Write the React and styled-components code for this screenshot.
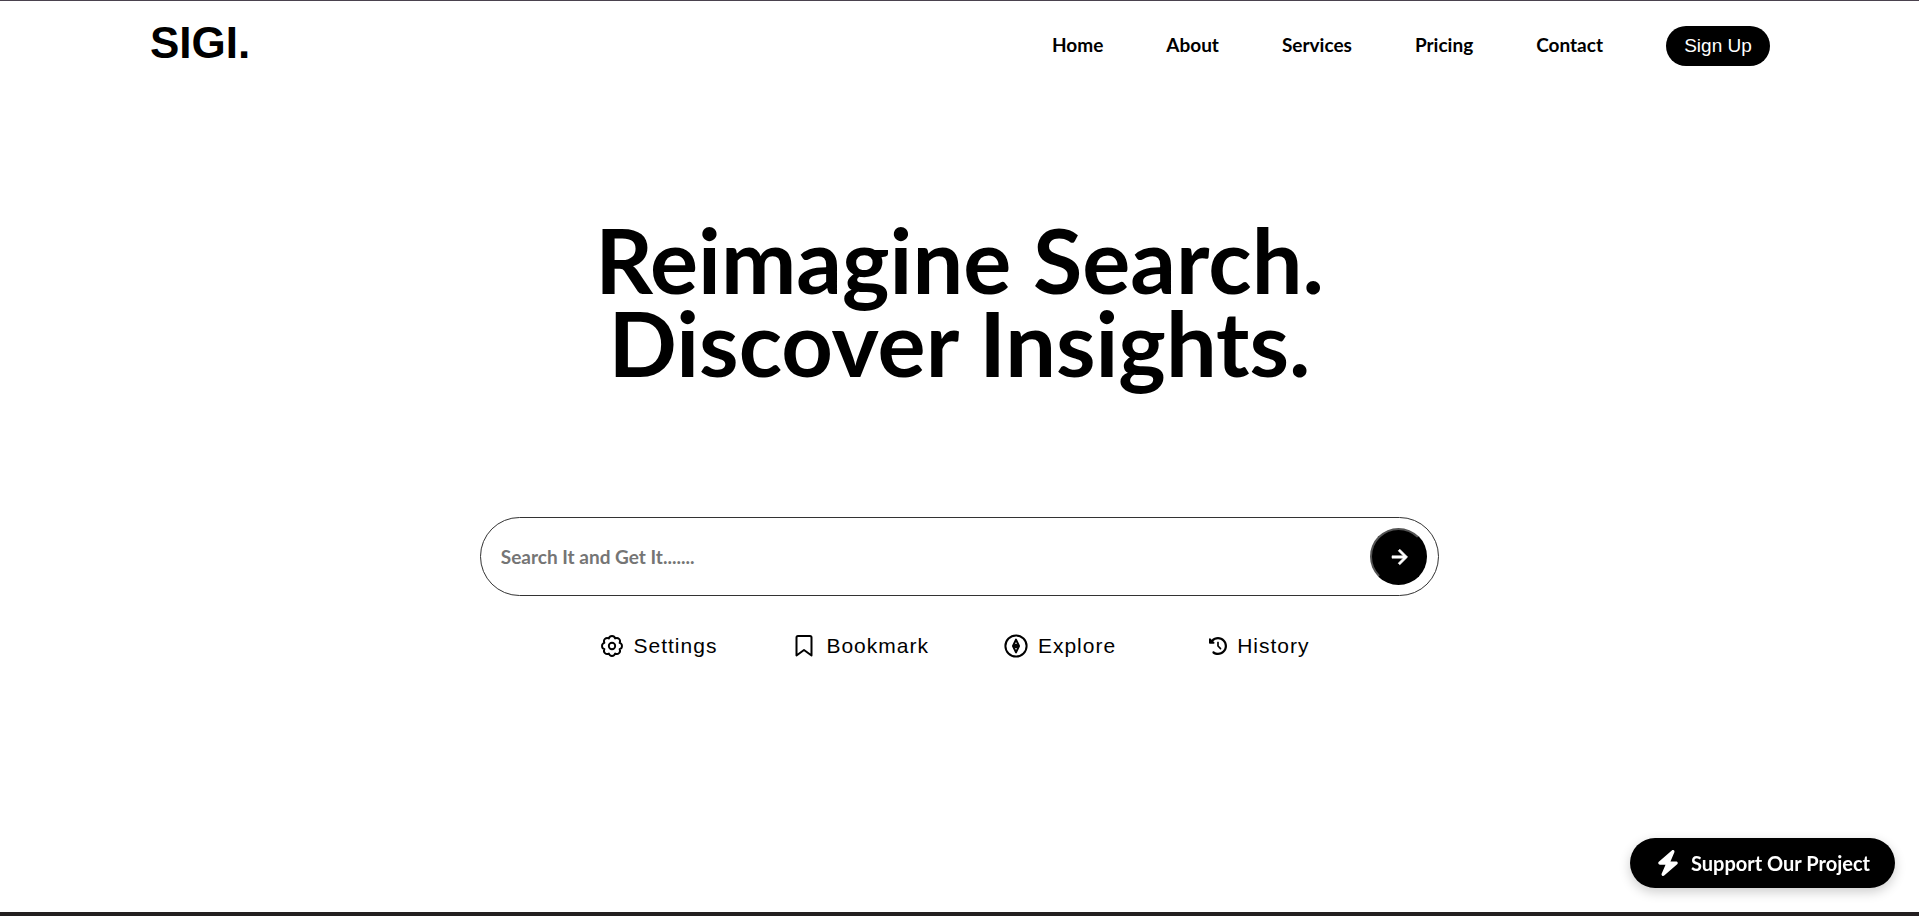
import React, { useState } from "react";
import styled, { createGlobalStyle } from "styled-components";
import { BiRightArrowAlt } from "react-icons/bi";
import { FaBolt, FaClockRotateLeft } from "react-icons/fa6";

const links = ["Home", "About", "Services", "Pricing", "Contact"];

const shortcuts = [
  { name: "Settings", icon: <SettingsIcon /> },
  { name: "Bookmark", icon: <BookmarkIcon /> },
  { name: "Explore", icon: <ExploreIcon /> },
  { name: "History", icon: <FaClockRotateLeft size={18} />, apart: true },
];

function SettingsIcon() {
  return (
    <svg width="24" height="24" viewBox="0 0 24 24" fill="none">
      <g stroke="currentColor" strokeWidth="1.9" strokeLinejoin="round">
        <path d="M8.86 4.42A3.25 3.25 0 0 1 15.14 4.42A3.25 3.25 0 0 1 19.58 8.86A3.25 3.25 0 0 1 19.58 15.14A3.25 3.25 0 0 1 15.14 19.58A3.25 3.25 0 0 1 8.86 19.58A3.25 3.25 0 0 1 4.42 15.14A3.25 3.25 0 0 1 4.42 8.86A3.25 3.25 0 0 1 8.86 4.42Z" />
        <circle cx="12" cy="12" r="3.2" />
      </g>
    </svg>
  );
}

function BookmarkIcon() {
  return (
    <svg width="24" height="24" viewBox="0 0 24 24" fill="none">
      <path
        d="M4.5 21.5V3.5Q4.5 2 6 2H18Q19.5 2 19.5 3.5V21.5L12 16Z"
        stroke="currentColor"
        strokeWidth="2"
        strokeLinejoin="round"
      />
    </svg>
  );
}

function ExploreIcon() {
  return (
    <svg width="24" height="24" viewBox="0 0 24 24" fill="none">
      <g stroke="currentColor" strokeWidth="2" strokeLinejoin="round">
        <circle cx="12" cy="12" r="10.6" />
        <path d="M12 5.6L15 12L12 18.4L9 12Z" />
        <circle cx="12" cy="12" r="1.2" />
      </g>
    </svg>
  );
}

export default function App() {
  const [query, queryChange] = useState("");

  return (
    <Page>
      <GlobalStyle />
      <Header>
        <Logo href="#">SIGI.</Logo>
        <Nav>
          {links.map((link) => {
            return (
              <NavLink key={link} href="#">
                {link}
              </NavLink>
            );
          })}
          <SignUp>Sign Up</SignUp>
        </Nav>
      </Header>
      <Hero>
        <Title>
          Reimagine Search.
          <br />
          Discover Insights.
        </Title>
        <SearchBar onSubmit={(ev) => ev.preventDefault()}>
          <SearchInput
            aria-label="Search"
            placeholder="Search It and Get It......."
            value={query}
            onChange={(ev) => {
              queryChange(ev.target.value);
            }}
          />
          <SearchButton aria-label="Go">
            <BiRightArrowAlt size={28} stroke="currentColor" strokeWidth={0.5} />
          </SearchButton>
        </SearchBar>
        <Shortcuts>
          {shortcuts.map((item) => {
            return (
              <Shortcut key={item.name} href="#" $apart={item.apart}>
                {item.icon}
                {item.name}
              </Shortcut>
            );
          })}
        </Shortcuts>
      </Hero>
      <Support>
        <FaBolt size={26} />
        Support Our Project
      </Support>
    </Page>
  );
}

const GlobalStyle = createGlobalStyle`
  * {
    box-sizing: border-box;
  }

  body {
    margin: 0;
    background: #fff;
    color: #000;
    font-family: Lato, sans-serif;
  }
`;

const Page = styled.div`
  min-height: 100vh;
  display: flex;
  flex-direction: column;
  border-top: 1px solid #4a424e;
  border-bottom: 4px solid #231f20;
`;

const Header = styled.header`
  display: flex;
  justify-content: space-between;
  align-items: flex-start;
  padding: 16px 149px 0 150px;
`;

const Logo = styled.a`
  font-family: "Liberation Sans", Arial, sans-serif;
  font-size: 44px;
  line-height: 52px;
  font-weight: 700;
  color: #000;
  text-decoration: none;
`;

const Nav = styled.nav`
  display: flex;
  align-items: center;
  gap: 63px;
  padding-top: 9px;
`;

const NavLink = styled.a`
  padding-bottom: 2px;
  font-size: 19px;
  line-height: 24px;
  font-weight: 700;
  color: #000;
  text-decoration: none;
`;

const SignUp = styled.button`
  width: 104px;
  height: 40px;
  padding: 0;
  border: none;
  border-radius: 20px;
  background: #000;
  color: #fff;
  font-family: "Liberation Sans", Arial, sans-serif;
  font-size: 19px;
`;

const Hero = styled.main`
  display: flex;
  flex-direction: column;
  align-items: center;
  padding-top: 149px;
`;

const Title = styled.h1`
  margin: 0;
  font-size: 90px;
  line-height: 83px;
  font-weight: 700;
  text-align: center;
`;

const SearchBar = styled.form`
  width: 50%;
  height: 79px;
  margin-top: 133px;
  padding: 0 11px 0 20px;
  display: flex;
  align-items: center;
  border: 1px solid #333;
  border-radius: 40px;
`;

const SearchInput = styled.input`
  flex: 1;
  min-width: 0;
  padding: 0;
  border: none;
  outline: none;
  background: none;
  font-family: inherit;
  font-size: 19px;
  font-weight: 700;

  &::placeholder {
    color: #757575;
  }
`;

const SearchButton = styled.button`
  width: 57px;
  height: 57px;
  padding: 0;
  display: flex;
  align-items: center;
  justify-content: center;
  border: 2px outset #000;
  border-radius: 50%;
  background: #000;
  color: #fff;
`;

const Shortcuts = styled.div`
  display: flex;
  align-items: center;
  gap: 75px;
  margin-top: 37px;
  padding-right: 10px;
`;

const Shortcut = styled.a`
  display: flex;
  align-items: center;
  gap: 10px;
  margin-left: ${(props) => (props.$apart ? "18px" : "0")};
  font-family: "Liberation Sans", Arial, sans-serif;
  font-size: 21px;
  line-height: 26px;
  letter-spacing: 1px;
  color: #000;
  text-decoration: none;
`;

const Support = styled.button`
  position: fixed;
  right: 24px;
  bottom: 28px;
  height: 50px;
  padding: 0 25px;
  display: flex;
  align-items: center;
  gap: 10px;
  border: none;
  border-radius: 25px;
  background: #000;
  color: #fff;
  font-family: inherit;
  font-size: 20px;
  font-weight: 700;
  box-shadow: 0 4px 12px rgba(0, 0, 0, 0.2);
`;
